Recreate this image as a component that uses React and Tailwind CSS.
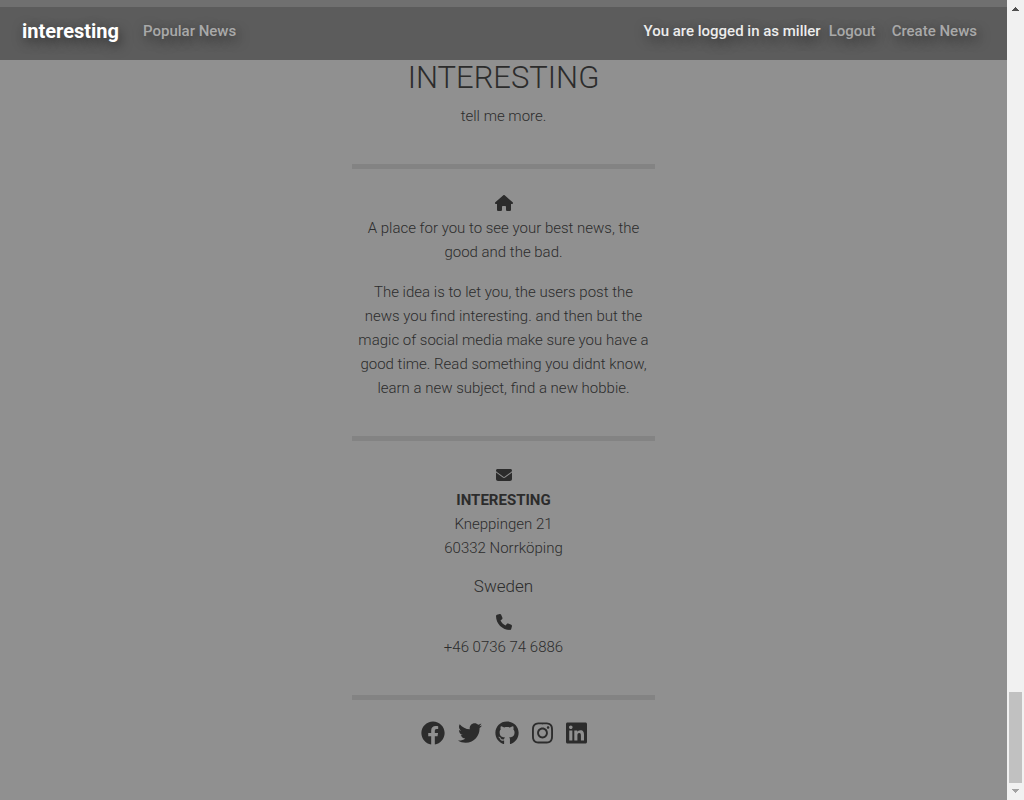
import React from "react";
import {
  FaHouse,
  FaEnvelope,
  FaPhone,
} from "react-icons/fa6";
import { FaFacebook, FaTwitter, FaGithub, FaInstagram, FaLinkedin } from "react-icons/fa";

const socials = [
  { label: "Facebook", Icon: FaFacebook, size: "size-6" },
  { label: "Twitter", Icon: FaTwitter, size: "size-6" },
  { label: "GitHub", Icon: FaGithub, size: "size-6" },
  { label: "Instagram", Icon: FaInstagram, size: "h-6 w-[21px]" },
  { label: "LinkedIn", Icon: FaLinkedin, size: "h-6 w-[21px]" },
];

function Navbar() {
  return (
    <header className="bg-[#707070] pt-[7px]">
      <nav className="flex h-[53px] items-center bg-[#5c5c5c] pr-[30px] pb-[6px] pl-[22px] text-[15px] leading-6 font-medium text-[#a9a9a9] [text-shadow:2px_4px_12px_rgba(0,0,0,0.55)]">
        <a href="#home" className="mr-6 text-xl font-bold text-white">
          interesting
        </a>
        <a href="#popular">Popular News</a>
        <span className="ml-auto text-[#ececec]">You are logged in as miller</span>
        <a href="#logout" className="ml-2">
          Logout
        </a>
        <a href="#create" className="ml-4">
          Create News
        </a>
      </nav>
    </header>
  );
}

function Divider() {
  return <hr className="h-[5px] border-0 bg-[#838383]" />;
}

function Footer() {
  return (
    <footer className="mx-auto w-[303px] text-center text-[15px] leading-6 font-light text-[#2c2c2c]">
      <h1 className="text-[31px] leading-9">INTERESTING</h1>
      <p className="mt-2 mb-9">tell me more.</p>
      <Divider />
      <section className="pt-[26px] pb-9">
        <FaHouse className="mx-auto mb-[5px] h-4 w-[18px]" />
        <p className="mb-4">
          A place for you to see your best news, the
          <br />
          good and the bad.
        </p>
        <p>
          The idea is to let you, the users post the
          <br />
          news you find interesting. and then but the
          <br />
          magic of social media make sure you have a
          <br />
          good time. Read something you didnt know,
          <br />
          learn a new subject, find a new hobbie.
        </p>
      </section>
      <Divider />
      <section className="pt-[26px] pb-9">
        <FaEnvelope className="mx-auto mb-[5px] size-4" />
        <address className="not-italic">
          <strong className="font-bold">INTERESTING</strong>
          <br />
          Kneppingen 21
          <br />
          60332 Norrköping
        </address>
        <p className="mt-[14px] mb-4 text-[17px] leading-6">Sweden</p>
        <FaPhone className="mx-auto mb-[5px] size-4" />
        <p>+46 0736 74 6886</p>
      </section>
      <Divider />
      <div className="flex justify-center gap-[13px] pt-[21px] pb-8">
        {socials.map(({ label, Icon, size }) => (
          <a key={label} href="#social" aria-label={label}>
            <Icon className={size} />
          </a>
        ))}
      </div>
    </footer>
  );
}

function Scrollbar() {
  return (
    <div aria-hidden="true" className="flex w-[17px] shrink-0 flex-col items-center bg-[#f1f1f1] py-[7px]">
      <svg viewBox="0 0 7 4" className="h-1 w-[7px]" shapeRendering="crispEdges">
        <path d="M3 0h1v1h1v1h1v1h1v1H0V3h1V2h1V1h1z" fill="#505050" />
      </svg>
      <div className="mt-auto mb-[6px] h-[91px] w-[13px] bg-[#c1c1c1]" />
      <svg viewBox="0 0 7 4" className="h-1 w-[7px]" shapeRendering="crispEdges">
        <path d="M0 0h7v1H6v1H5v1H4v1H3V3H2V2H1V1H0z" fill="#a3a3a3" />
      </svg>
    </div>
  );
}

export default function App() {
  return (
    <div className="flex min-h-screen bg-[#909090] font-['Roboto',sans-serif]">
      <div className="min-w-0 flex-1">
        <Navbar />
        <Footer />
      </div>
      <Scrollbar />
    </div>
  );
}
